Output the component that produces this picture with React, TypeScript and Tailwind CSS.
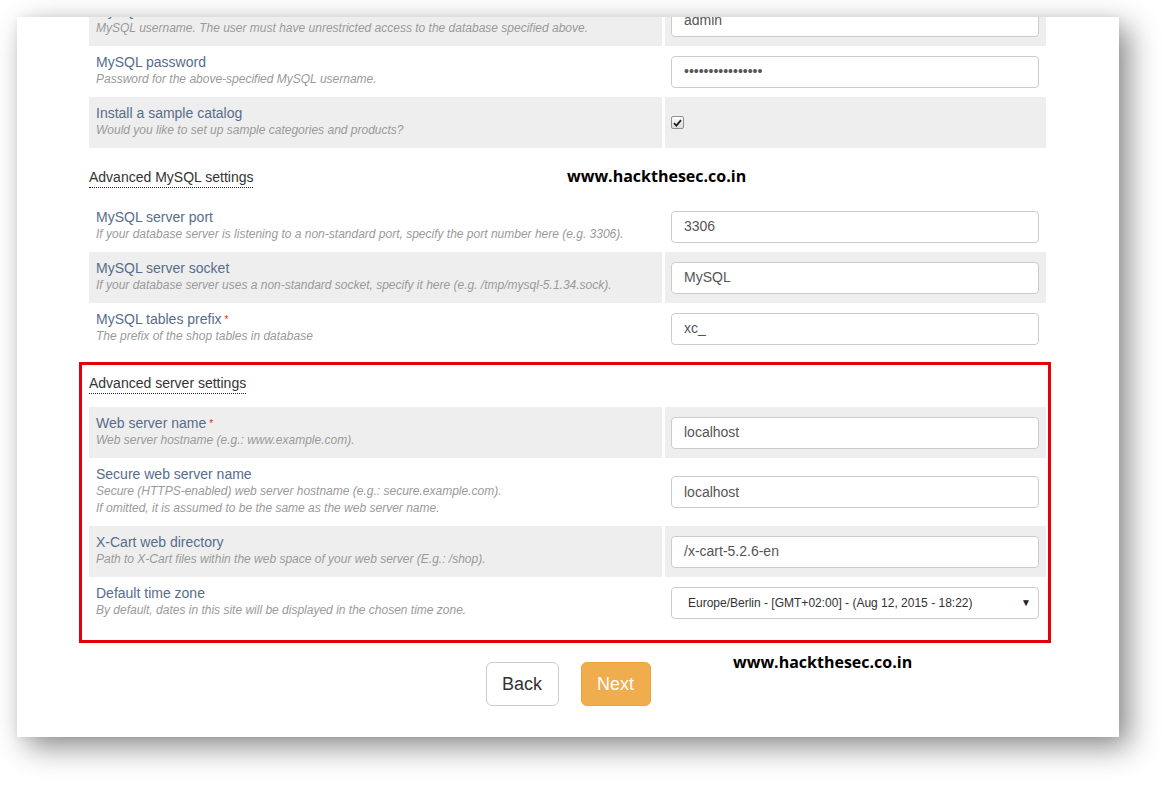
import React from "react";

interface Field {
  label: string;
  hint: string[];
  required?: boolean;
  kind: "text" | "checkbox" | "select";
  value?: string;
  shaded?: boolean;
}

const dbFields: Field[] = [
  {
    label: "MySQL username",
    hint: ["MySQL username. The user must have unrestricted access to the database specified above."],
    kind: "text",
    value: "admin",
    shaded: true,
  },
  {
    label: "MySQL password",
    hint: ["Password for the above-specified MySQL username."],
    kind: "text",
    value: "••••••••••••••••",
  },
  {
    label: "Install a sample catalog",
    hint: ["Would you like to set up sample categories and products?"],
    kind: "checkbox",
    shaded: true,
  },
];

const mysqlFields: Field[] = [
  {
    label: "MySQL server port",
    hint: ["If your database server is listening to a non-standard port, specify the port number here (e.g. 3306)."],
    kind: "text",
    value: "3306",
  },
  {
    label: "MySQL server socket",
    hint: ["If your database server uses a non-standard socket, specify it here (e.g. /tmp/mysql-5.1.34.sock)."],
    kind: "text",
    value: "MySQL",
    shaded: true,
  },
  {
    label: "MySQL tables prefix",
    hint: ["The prefix of the shop tables in database"],
    kind: "text",
    value: "xc_",
    required: true,
  },
];

const serverFields: Field[] = [
  {
    label: "Web server name",
    hint: ["Web server hostname (e.g.: www.example.com)."],
    kind: "text",
    value: "localhost",
    required: true,
    shaded: true,
  },
  {
    label: "Secure web server name",
    hint: [
      "Secure (HTTPS-enabled) web server hostname (e.g.: secure.example.com).",
      "If omitted, it is assumed to be the same as the web server name.",
    ],
    kind: "text",
    value: "localhost",
  },
  {
    label: "X-Cart web directory",
    hint: ["Path to X-Cart files within the web space of your web server (E.g.: /shop)."],
    kind: "text",
    value: "/x-cart-5.2.6-en",
    shaded: true,
  },
  {
    label: "Default time zone",
    hint: ["By default, dates in this site will be displayed in the chosen time zone."],
    kind: "select",
    value: "Europe/Berlin - [GMT+02:00] - (Aug 12, 2015 - 18:22)",
  },
];

function Control({ field }: { field: Field }) {
  if (field.kind === "checkbox") {
    return (
      <span className="flex h-[13px] w-[13px] items-center justify-center rounded-[2px] border border-[#8f8f8f] bg-gradient-to-b from-[#fdfdfd] to-[#dcdcdc]">
        <svg width="9" height="8" viewBox="0 0 9 8">
          <path d="M1 4.2 L3.4 6.6 L8 1.2" fill="none" stroke="#222" strokeWidth="1.8" />
        </svg>
      </span>
    );
  }
  if (field.kind === "select") {
    return (
      <div className="flex h-[32px] w-full items-center justify-between rounded-[4px] border border-[#ccc] bg-white pl-[16px] pr-[7px] text-[12px] text-[#333]">
        <span>{field.value}</span>
        <span className="text-[10px] text-[#222]">▼</span>
      </div>
    );
  }
  return (
    <div className="flex h-[32px] w-full items-center rounded-[4px] border border-[#ccc] bg-white px-[12px] text-[14px] text-[#555]">
      {field.value}
    </div>
  );
}

function FieldRow({ field }: { field: Field }) {
  const bg = field.shaded ? "bg-[#eeeeee]" : "bg-white";
  return (
    <>
      <div className={`${bg} pl-[7px] pt-[8px] pb-[9px]`}>
        <div className="text-[14px] leading-[17px] text-[#566d8b]">
          {field.label}
          {field.required && <span className="ml-[3px] align-top text-[10px] text-[#d9261c]">*</span>}
        </div>
        {field.hint.map((line) => (
          <div key={line} className="text-[12px] italic leading-[17px] text-[#9a9a9a]">
            {line}
          </div>
        ))}
      </div>
      <div className={`${bg} flex items-center pl-[6px] pr-[7px]`}>
        <Control field={field} />
      </div>
    </>
  );
}

function FieldTable({ fields }: { fields: Field[] }) {
  return (
    <div className="grid grid-cols-[573px_381px] gap-x-[3px]">
      {fields.map((f) => (
        <FieldRow key={f.label} field={f} />
      ))}
    </div>
  );
}

function SectionTitle({ children, className }: { children: React.ReactNode; className: string }) {
  return (
    <div className={`flex ${className}`}>
      <span className="block border-b border-dotted border-[#222] pb-[1px] text-[14px] leading-[17px] text-[#333]">
        {children}
      </span>
    </div>
  );
}

export default function App() {
  return (
    <div
      className="relative h-[785px] w-[1167px] overflow-hidden bg-white pl-[17px] pt-[17px]"
      style={{ fontFamily: '"Liberation Sans", Arial, sans-serif' }}
    >
      <div className="h-[720px] w-[1102px] overflow-hidden bg-white shadow-[10px_10px_28px_rgba(0,0,0,0.45),0_0_10px_rgba(0,0,0,0.06)]">
        <div className="-mt-[22px]">
          <div className="ml-[72px] w-[957px]">
            <FieldTable fields={dbFields} />
            <SectionTitle className="mb-[13px] mt-[21px]">Advanced MySQL settings</SectionTitle>
            <FieldTable fields={mysqlFields} />
          </div>

          {/* server settings block, outlined */}
          <div className="ml-[62px] mt-[8px] w-[972px] border-[3px] border-[#e3000b] pb-[12px] pl-[7px] pr-[2px] pt-[10px]">
            <SectionTitle className="mb-[13px]">Advanced server settings</SectionTitle>
            <FieldTable fields={serverFields} />
          </div>

          <div className="mt-[19px] flex justify-center gap-[22px]">
            <button className="h-[44px] w-[73px] rounded-[6px] border border-[#ccc] bg-white text-[18px] text-[#333]">
              Back
            </button>
            <button className="h-[44px] w-[70px] rounded-[6px] border border-[#eea236] bg-[#f0ad4e] text-[18px] text-white">
              Next
            </button>
          </div>
        </div>
      </div>

      <div
        className="absolute left-[567px] top-[165px] text-[16px] font-bold leading-[22px] text-black"
        style={{ fontFamily: '"Open Sans", sans-serif' }}
      >
        www.hackthesec.co.in
      </div>
      <div
        className="absolute left-[733px] top-[651px] text-[16px] font-bold leading-[22px] text-black"
        style={{ fontFamily: '"Open Sans", sans-serif' }}
      >
        www.hackthesec.co.in
      </div>
    </div>
  );
}
